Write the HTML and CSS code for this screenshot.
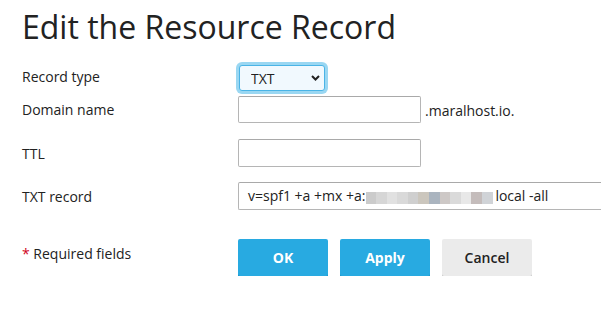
FILE: index.html
```html
<!DOCTYPE html>
<html lang="en">
<head>
    <meta charset="UTF-8">
    <title>Edit the Resource Record</title>
    <link rel="stylesheet" href="styles.css">
</head>
<body>

    <h1 class="page-title">Edit the Resource Record</h1>

    <form class="record-form">
        <div class="row row-type">
            <label class="field-label" for="record-type">Record type</label>
            <div class="select-wrap">
                <select id="record-type" class="select">
                    <option>TXT</option>
                </select>
                <svg class="chevron" width="9" height="6" viewBox="0 0 9 6">
                    <path d="M1 1 L4.5 4.5 L8 1" fill="none" stroke="#222" stroke-width="2"/>
                </svg>
            </div>
        </div>

        <div class="row row-domain">
            <label class="field-label" for="domain-name">Domain name</label>
            <input type="text" id="domain-name" class="text-input">
            <span class="suffix">.maralhost.io.</span>
        </div>

        <div class="row row-ttl">
            <label class="field-label" for="ttl">TTL</label>
            <input type="text" id="ttl" class="text-input">
        </div>

        <div class="row row-txt">
            <label class="field-label">TXT record</label>
            <div class="text-input wide">v=spf1 +a +mx +a:<span class="masked"></span>local -all</div>
        </div>

        <div class="row row-actions">
            <p class="required"><span class="star">*</span> Required fields</p>
            <div class="buttons">
                <button type="button" class="btn btn-primary">OK</button>
                <button type="button" class="btn btn-primary">Apply</button>
                <button type="button" class="btn btn-plain">Cancel</button>
            </div>
        </div>
    </form>

</body>
</html>
```

FILE: styles.css
```css
* {
    margin: 0;
    padding: 0;
    box-sizing: border-box;
}

body {
    background: #fff;
    color: #222;
    font-family: 'Open Sans', 'Noto Sans', sans-serif;
    font-size: 14px;
    line-height: 18px;
    padding-left: 22px;
    overflow: hidden;
}

.page-title {
    font-size: 32px;
    font-weight: 400;
    line-height: 44px;
    margin-top: 5px;
    color: #222;
}

.record-form {
    margin-top: 13px;
}

.row {
    display: flex;
    align-items: center;
}

.field-label {
    width: 216px;
    flex-shrink: 0;
}

.row-type {
    height: 32px;
}

.row-type .field-label {
    padding-bottom: 2px;
}

.row-domain {
    margin-top: 2px;
}

.row-ttl {
    margin-top: 16px;
}

.row-txt {
    margin-top: 15px;
}

.row-ttl .field-label {
    padding-top: 1px;
}

.row-txt .field-label {
    padding-top: 2px;
}

/* select */
.select-wrap {
    position: relative;
    margin-left: 1px;
}

.select {
    appearance: none;
    -webkit-appearance: none;
    width: 86px;
    height: 26px;
    padding: 0 0 0 11px;
    border: 1px solid #4ab4e6;
    border-radius: 3px;
    background: #f1f9fe;
    box-shadow: 0 0 0 3px #9ad7f2;
    font-family: 'Open Sans', 'Noto Sans', sans-serif;
    font-size: 14px;
    color: #222;
    outline: none;
}

.chevron {
    position: absolute;
    right: 5px;
    top: 10px;
}

/* inputs */
.text-input {
    flex-shrink: 0;
    width: 183px;
    height: 27px;
    border: 1px solid #b5b5b5;
    border-top-color: #a9a9a9;
    border-radius: 2px;
    background: #fff;
    font-family: 'Open Sans', 'Noto Sans', sans-serif;
    font-size: 14px;
    color: #222;
}

.row-ttl .text-input,
.text-input.wide {
    height: 28px;
}

.text-input.wide {
    width: 363px;
    border-right: none;
    border-radius: 2px 0 0 2px;
    padding-left: 9px;
    line-height: 26px;
    white-space: nowrap;
    overflow: hidden;
}

.masked {
    display: inline-block;
    vertical-align: -3px;
    width: 127px;
    height: 12px;
    margin: 0 2px 0 1px;
    background: linear-gradient(to right,
        #cbcbcb 0 10px, #d6d6d6 10px 21px, #e1e1e1 21px 31px, #d9d9d9 31px 42px,
        #cfcfcf 42px 52px, #cbc6bd 52px 63px, #aab4bf 63px 74px, #cdc8c6 74px 84px,
        #dadada 84px 95px, #e8e8e8 95px 105px, #c4bcbb 105px 116px, #d0d3d7 116px 127px);
}

.suffix {
    margin-left: 4px;
    padding-top: 3px;
}

/* buttons */
.row-actions {
    margin-top: 29px;
    align-items: flex-start;
}

.required {
    width: 216px;
    flex-shrink: 0;
    padding-top: 6px;
}

.star {
    color: #d0021b;
}

.buttons {
    display: flex;
    gap: 12px;
}

.btn {
    width: 90px;
    height: 37px;
    border: none;
    border-radius: 2px;
    font-family: 'Open Sans', 'Noto Sans', sans-serif;
    font-size: 14px;
    font-weight: 600;
    cursor: pointer;
}

.btn-primary {
    background: #28aae1;
    color: #fff;
    font-weight: 700;
    box-shadow: 0 2px 0 #1f8ec0;
}

.btn-plain {
    background: #ebebeb;
    color: #222;
    box-shadow: 0 2px 0 #c6c6c6;
}
```
